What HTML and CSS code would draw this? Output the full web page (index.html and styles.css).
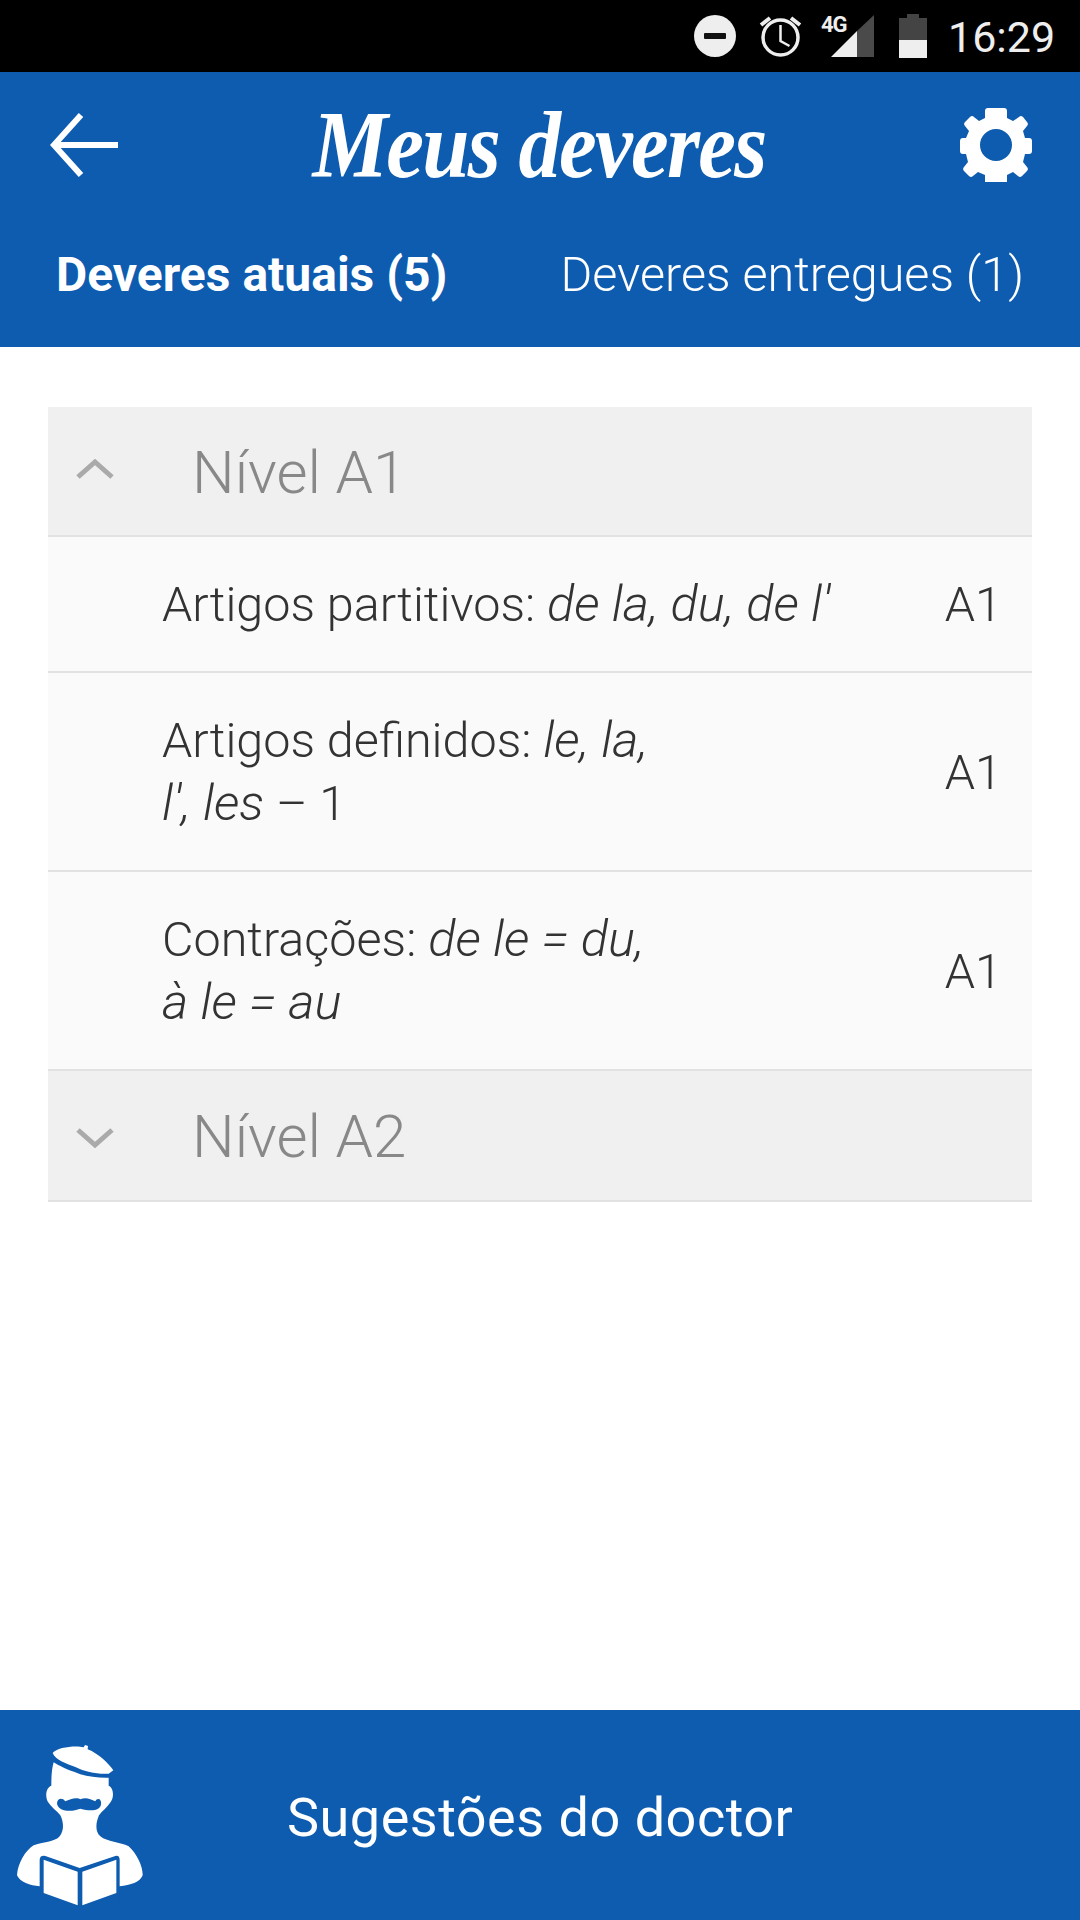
FILE: index.html
```html
<!DOCTYPE html>
<html lang="pt">
<head>
    <meta charset="UTF-8">
    <meta name="viewport" content="width=device-width, initial-scale=1.0">
    <title>Meus deveres</title>
    <link rel="stylesheet" href="styles.css">
</head>
<body>
    <div class="status-bar">
        <svg class="st-dnd" width="42" height="42" viewBox="0 0 42 42">
            <circle cx="21" cy="21" r="21" fill="#eeeeee"/>
            <rect x="10" y="18" width="22" height="6" rx="1" fill="#111"/>
        </svg>
        <svg class="st-alarm" width="43" height="44" viewBox="0 0 43 44" fill="none" stroke="#eeeeee">
            <circle cx="21.5" cy="23.500" r="17.500" stroke-width="3.500"/>
            <path d="M21.500 11v16l9 5" stroke-width="2.500"/>
            <path d="M2 11 11 4M41 11 32 4" stroke-width="4"/>
        </svg>
        <div class="st-signal">
            <span class="st-4g">4G</span>
            <svg width="54" height="44" viewBox="0 0 54 44">
                <path d="M10 43 36 17V43Z" fill="#eeeeee"/>
                <path d="M36 17 53 1V43H36Z" fill="#4a4a4a"/>
            </svg>
        </div>
        <svg class="st-battery" width="28" height="44" viewBox="0 0 28 44">
            <path d="M8 0H20V4H28V26H0V4H8Z" fill="#444"/>
            <rect y="26" width="28" height="18" fill="#eeeeee"/>
        </svg>
        <span class="st-time">16:29</span>
    </div>

    <div class="app-header">
        <div class="top-row">
            <svg class="back-icon" width="68" height="64" viewBox="0 0 68 64" fill="none" stroke="#fff" stroke-width="6">
                <path d="M68 32H5M31 2 4 32l27 30"/>
            </svg>
            <h1 class="page-title">Meus deveres</h1>
            <svg class="gear-icon" width="72" height="74" viewBox="0 0 72 74">
                <path fill="#fff" fill-rule="evenodd" d="M28 0h16a3 3 0 0 1 3 3v7l6 3 6-4a3 3 0 0 1 4 0l4 5a3 3 0 0 1 0 4l-4 5 2 7h4a3 3 0 0 1 3 3v10a3 3 0 0 1-3 3h-4l-2 8 4 5a3 3 0 0 1 0 4l-5 5a3 3 0 0 1-4 0l-5-4-6 3v6a3 3 0 0 1-3 3H28a3 3 0 0 1-3-3v-6l-7-3-5 4a3 3 0 0 1-4 0l-5-5a3 3 0 0 1 0-4l4-5-2-8H3a3 3 0 0 1-3-3V33a3 3 0 0 1 3-3h3l3-7-4-5a3 3 0 0 1 0-4l5-5a3 3 0 0 1 4 0l5 4 6-3V3a3 3 0 0 1 3-3ZM36 21a16 16 0 1 0 0 32 16 16 0 0 0 0-32Z"/>
            </svg>
        </div>
        <div class="tabs">
            <span class="tab active">Deveres atuais (5)</span>
            <span class="tab">Deveres entregues (1)</span>
        </div>
    </div>

    <div class="content">
        <div class="level">
            <svg class="chevron chevron-up" width="38" height="20" viewBox="0 0 38 20" fill="none" stroke="#aaaaaa" stroke-width="5">
                <path d="M2 18 19 3l17 15"/>
            </svg>
            <span class="level-name">Nível A1</span>
        </div>
        <div class="lesson">
            <div class="lesson-name">Artigos partitivos: <i>de la, du, de l'</i></div>
            <div class="lesson-tag">A1</div>
        </div>
        <div class="lesson">
            <div class="lesson-name">Artigos definidos: <i>le, la,</i><br><i>l', les</i> – 1</div>
            <div class="lesson-tag">A1</div>
        </div>
        <div class="lesson">
            <div class="lesson-name">Contrações: <i>de le = du,</i><br><i>à le = au</i></div>
            <div class="lesson-tag">A1</div>
        </div>
        <div class="level level-last">
            <svg class="chevron" width="38" height="20" viewBox="0 0 38 20" fill="none" stroke="#aaaaaa" stroke-width="5">
                <path d="M2 2l17 15L36 2"/>
            </svg>
            <span class="level-name">Nível A2</span>
        </div>
    </div>

    <div class="footer">
        <svg class="doctor-icon" width="126" height="163" viewBox="50 134 378 489">
            <path fill="#fff" d="M157 158C170 141 225 135 250 141L254 134 263 137 262 147C295 160 325 190 339 210L325 220C290 222 255 215 225 200 200 190 165 180 157 158Z"/>
            <path fill="#fff" d="M160 186C190 205 215 212 240 222 265 230 300 233 325 232V256C340 262 342 290 331 305 322 320 305 332 296 345 285 370 285 395 300 408 320 425 360 425 385 438 410 460 428 500 427 525 420 545 390 555 358 558H118C90 556 58 545 50 525 52 490 75 450 100 435 125 425 165 425 178 408 192 390 190 365 180 345 170 332 152 320 143 305 134 290 136 262 153 256 153 230 154 205 160 186Z"/>
            <path fill="#0d5cb0" d="M170 310C170 295 185 290 195 303 210 295 230 290 240 297 255 290 270 295 285 303 290 290 305 295 302 312 300 330 275 335 240 325 215 335 175 335 170 310Z"/>
            <path fill="#0d5cb0" d="M118 480Q118 464 135 467L238 503 345 467Q358 464 358 480V600H118Z"/>
            <path fill="#fff" d="M130 478 232 514V615L130 578ZM246 514 348 478V578L246 615Z"/>
        </svg>
        <span class="footer-label">Sugestões do doctor</span>
    </div>
</body>
</html>
```

FILE: styles.css
```css
* {
    box-sizing: border-box;
}
body {
    margin: 0;
    width: 1080px;
    height: 1920px;
    display: flex;
    flex-direction: column;
    background: #fff;
    font-family: Roboto, "Liberation Sans", sans-serif;
}
.status-bar {
    height: 72px;
    background: #000;
    display: flex;
    align-items: flex-start;
    padding: 14px 0 0 694px;
    flex-shrink: 0;
}
.status-bar svg {
    display: block;
    flex-shrink: 0;
}
.st-dnd {
    margin: 1px 23px 0 0;
}
.st-alarm {
    margin-right: 19px;
}
.st-signal {
    position: relative;
    margin-right: 24px;
}
.st-4g {
    position: absolute;
    left: 0;
    top: 0;
    font-size: 22px;
    font-weight: 700;
    line-height: 22px;
    letter-spacing: -1px;
    color: #eeeeee;
}
.st-battery {
    margin-right: 21px;
}
.st-time {
    font-size: 43px;
    line-height: 46px;
    color: #eeeeee;
}
.app-header {
    height: 275px;
    background: #0d5cb0;
    color: #fff;
    flex-shrink: 0;
}
.top-row {
    height: 145px;
    display: flex;
    justify-content: space-between;
    align-items: center;
    padding: 0 48px 0 50px;
}
.page-title {
    margin: 0;
    font-family: "Liberation Serif", serif;
    font-size: 96px;
    font-style: italic;
    font-weight: 700;
    line-height: 100px;
    letter-spacing: -2px;
    transform: scaleX(0.885);
}
.tabs {
    display: flex;
    justify-content: space-between;
    padding: 28px 56px 0;
}
.tab {
    font-size: 48.500px;
    font-weight: 300;
    line-height: 60px;
}
.tab.active {
    font-size: 48px;
    font-weight: 700;
}
.content {
    margin: 60px 48px 0;
}
.level {
    height: 130px;
    display: flex;
    align-items: center;
    background: #f0f0f0;
    border-bottom: 2px solid #e2e2e2;
    padding-left: 28px;
}
.level-last {
    height: 131px;
}
.chevron {
    margin: 4px 78px 0 0;
    flex-shrink: 0;
}
.chevron-up {
    margin-top: -4px;
}
.level-name {
    margin-top: 2px;
    font-size: 60px;
    font-weight: 300;
    color: #888;
}
.lesson {
    display: flex;
    justify-content: space-between;
    align-items: center;
    padding: 36px 30px 35px 114px;
    background: #fafafa;
    border-bottom: 2px solid #e2e2e2;
    font-size: 48.500px;
    font-weight: 300;
    line-height: 63px;
    color: #333;
}
.lesson-name i {
    font-size: 50.500px;
    line-height: 0;
}
.footer {
    margin-top: auto;
    height: 210px;
    display: flex;
    align-items: center;
    background: #0d5cb0;
    color: #fff;
    padding-left: 17px;
    flex-shrink: 0;
}
.doctor-icon {
    margin: 22px 144px 0 0;
    flex-shrink: 0;
}
.footer-label {
    margin-top: 4px;
    font-size: 54px;
    letter-spacing: 0.500px;
}
```
